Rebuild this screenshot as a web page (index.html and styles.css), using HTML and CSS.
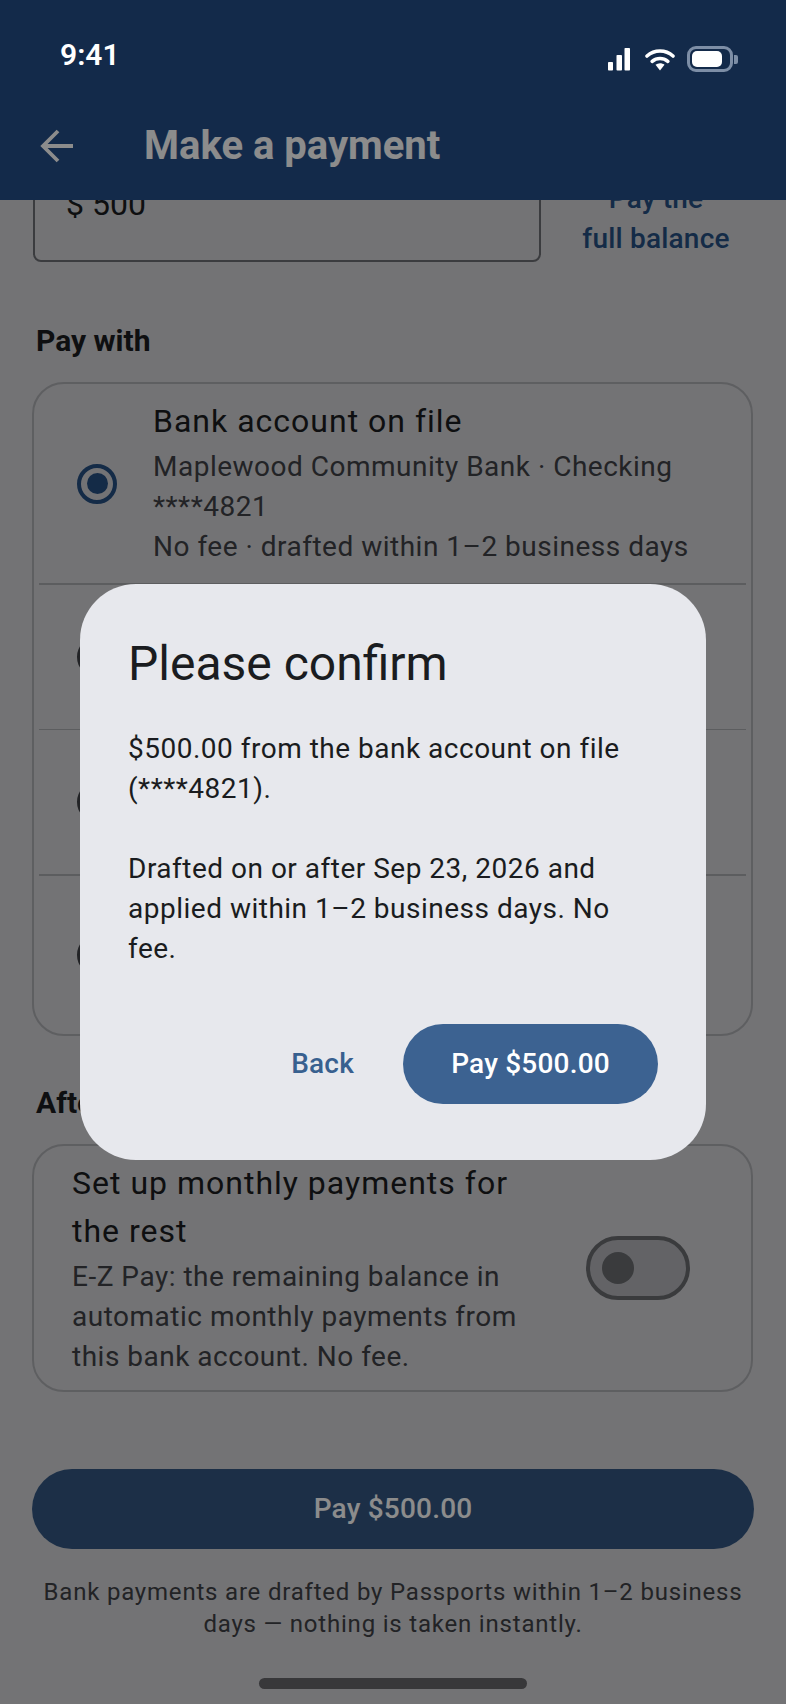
FILE: index.html
```html
<!DOCTYPE html>
<html lang="en">
<head>
<meta charset="utf-8">
<title>Make a payment</title>
<link rel="stylesheet" href="styles.css">
</head>
<body>
<div class="screen">
  <header class="appbar">
    <div class="appbar-row">
      <svg class="back" viewBox="0 0 34 34" width="34" height="34" aria-hidden="true"><path d="M33 17H3M18 2 3 17l15 15" fill="none" stroke="currentColor" stroke-width="3.8"/></svg>
      <h1 class="title">Make a payment</h1>
    </div>
  </header>
  <main class="viewport">
    <div class="content">
      <div class="amount-row">
        <div class="amount-input">$ 500</div>
        <a class="full-balance">Pay the<br>full balance</a>
      </div>
      <h2 class="section">Pay with</h2>
      <div class="card">
        <div class="pay-row first">
          <span class="radio on"></span>
          <div class="pay-text">
            <div class="pay-name">Bank account on file</div>
            <div class="pay-sub">Maplewood Community Bank · Checking<br>****4821<br>No fee · drafted within 1–2 business days</div>
          </div>
        </div>
        <div class="rule"></div>
        <div class="pay-row second"><span class="radio"></span></div>
        <div class="rule"></div>
        <div class="pay-row third"><span class="radio"></span></div>
        <div class="rule"></div>
        <div class="pay-row fourth"><span class="radio"></span></div>
      </div>
      <h2 class="section after">After this payment</h2>
      <div class="card plan">
        <div class="plan-text">
          <div class="plan-name">Set up monthly payments for the rest</div>
          <div class="plan-sub">E-Z Pay: the remaining balance in automatic monthly payments from this bank account. No fee.</div>
        </div>
        <span class="switch"><span class="thumb"></span></span>
      </div>
      <button class="pay-main">Pay $500.00</button>
      <p class="note">Bank payments are drafted by Passports within 1–2 business days — nothing is taken instantly.</p>
    </div>
  </main>
  <div class="scrim"></div>
  <div class="statusbar">
    <span class="time">9:41</span>
    <div class="status-icons">
      <svg class="signal" width="22" height="23" viewBox="0 0 22 23" aria-hidden="true"><rect x="0" y="14" width="5" height="8.5" rx=".8" fill="#fff"/><rect x="8.5" y="7" width="5.5" height="15.5" rx=".8" fill="#fff"/><rect x="16.5" y="0" width="5.5" height="22.5" rx=".8" fill="#fff"/></svg>
      <svg class="wifi" width="30" height="23" viewBox="0 0 30 23" aria-hidden="true"><path d="M2 8C9.500 1.300 20.500 1.300 28 8M7.200 13.300c4.600-3.800 11-3.800 15.600 0" fill="none" stroke="#fff" stroke-width="3.600" stroke-linecap="round"/><path d="M10.500 16.800c2.800-2 6.200-2 9 0L15 22.500z" fill="#fff"/></svg>
      <span class="battery"><span class="battery-fill"></span></span>
      <span class="battery-nub"></span>
    </div>
  </div>
  <div class="dialog">
    <h2 class="dialog-title">Please confirm</h2>
    <p class="dialog-body">$500.00 from the bank account on file (****4821).</p>
    <p class="dialog-body">Drafted on or after Sep 23, 2026 and applied within 1–2 business days. No fee.</p>
    <div class="dialog-actions">
      <button class="btn-text">Back</button>
      <button class="btn-fill">Pay $500.00</button>
    </div>
  </div>
  <div class="home-bar"></div>
</div>
</body>
</html>
```
FILE: styles.css
```css
* { box-sizing: border-box; }
html, body { margin: 0; padding: 0; }
body { background: #d1d1d5; font-family: Roboto, "Noto Sans", sans-serif; color: #1a1c20; }
.screen { position: relative; width: 786px; height: 1704px; overflow: hidden; background: #d1d1d5; display: flex; flex-direction: column; }
.appbar { height: 200px; flex: none; background: #244e87; color: #fff; padding: 114px 0 0 40px; }
.appbar-row { display: flex; align-items: center; height: 64px; }
.back { flex: none; margin-right: 70px; color: #fff; }
.title { margin: 0; font-size: 40px; font-weight: 700; line-height: 48px; }
.viewport { flex: 1; overflow: hidden; min-height: 0; }
.content { margin-top: -27px; padding: 0 34px; }
.amount-row { display: flex; align-items: flex-start; height: 89px; }
.amount-input { width: 508px; height: 89px; margin-left: -1px; border: 2px solid #6c6e73; border-radius: 8px; padding: 9px 0 0 31px; font-size: 32px; line-height: 40px; }
.full-balance { flex: 1; text-align: center; font-size: 28px; line-height: 40px; font-weight: 500; color: #254f82; padding: 6px 0 0 19px; letter-spacing: .2px; }
.section { margin: 0; font-size: 30px; font-weight: 700; line-height: 40px; padding: 0 0 0 2px; }
.amount-row + .section { margin-top: 59px; }
.card { margin: 21px 0 0 -2px; width: 721px; border: 2px solid #acadb1; border-radius: 32px; padding: 0 5px; }
.pay-row { display: flex; align-items: center; gap: 36px; padding-left: 38px; margin: 0; }
.pay-row.first { height: 199px; }
.pay-row.second { height: 144px; }
.pay-row.third { height: 144px; }
.pay-row.fourth { height: 158px; }
.rule { height: 1.5px; background: #a8a9ad; margin: 0; }
.radio { flex: none; width: 40px; height: 40px; border-radius: 50%; border: 4px solid #3f4145; position: relative; }
.radio.on { border-color: #254f82; }
.radio.on::after { content: ""; position: absolute; inset: 5.500px; border-radius: 50%; background: #254f82; }
.pay-text { flex: 1; min-width: 0; padding-bottom: 2px; }
.pay-name { font-size: 32px; line-height: 48px; letter-spacing: 1px; margin: -2px 0 2px; }
.pay-sub { font-size: 28px; line-height: 40px; letter-spacing: .5px; color: #3f4145; }
.section.after { margin-top: 47px; white-space: nowrap; }
.plan { display: flex; align-items: center; margin-top: 21px; height: 248px; padding: 0 0 0 38px; }
.plan-text { width: 450px; flex: none; margin-right: 64px; }
.plan-name { font-size: 32px; line-height: 48px; letter-spacing: 1px; margin-bottom: 2px; }
.plan-sub { font-size: 28px; line-height: 40px; letter-spacing: .5px; color: #3f4145; }
.switch { flex: none; width: 104px; height: 64px; border: 4px solid #6a6c70; border-radius: 32px; background: #b4b5ba; padding: 12px 0 0 12px; }
.thumb { display: block; width: 32px; height: 32px; border-radius: 50%; background: #6a6c70; }
.pay-main { display: block; margin: 77px 0 0 -2px; width: 722px; height: 80px; border: 0; border-radius: 40px; background: #335782; color: #fff; font: 500 28px/40px Roboto, sans-serif; letter-spacing: .2px; }
.note { margin: 27px 0 0; font-size: 24px; line-height: 32px; letter-spacing: .8px; text-align: center; color: #3f4145; }
.scrim { position: absolute; inset: 0; background: rgba(0, 0, 0, .45); }
.statusbar { position: absolute; left: 0; top: 0; right: 0; height: 112px; display: flex; justify-content: space-between; align-items: flex-start; padding: 36px 48px 0 60px; color: #fff; }
.time { font-size: 30px; line-height: 38px; font-weight: 600; }
.status-icons { display: flex; align-items: center; height: 32px; margin-top: 7px; }
.signal { margin-right: 15px; }
.wifi { margin-right: 12px; }
.battery { width: 46px; height: 26px; border: 3px solid #7d8ea6; border-radius: 9px; padding: 2px; display: block; }
.battery-fill { display: block; width: 30px; height: 100%; background: #fff; border-radius: 5px; }
.battery-nub { width: 4px; height: 9px; margin-left: 1px; background: #7d8ea6; border-radius: 0 2px 2px 0; }
.dialog { position: absolute; left: 80px; top: 584px; width: 626px; height: 576px; border-radius: 56px; background: #e7e8ed; padding: 48px 48px 0; display: flex; flex-direction: column; }
.dialog-title { margin: 0 0 33px; font-size: 48px; line-height: 64px; font-weight: 400; }
.dialog-body { margin: 0 0 40px; font-size: 28px; line-height: 40px; letter-spacing: .5px; }
.dialog-actions { display: flex; justify-content: flex-end; align-items: center; gap: 48px; margin-top: auto; margin-bottom: 56px; }
.btn-text { border: 0; background: none; padding: 0; font: 500 28px/40px Roboto, sans-serif; color: #38608f; letter-spacing: .2px; margin-right: 1px; }
.btn-fill { border: 0; height: 80px; width: 255px; border-radius: 40px; background: #3c6291; color: #fff; font: 500 28px/40px Roboto, sans-serif; letter-spacing: .2px; }
.home-bar { position: absolute; left: 259px; top: 1678px; width: 268px; height: 11px; border-radius: 6px; background: #38383a; }
```
